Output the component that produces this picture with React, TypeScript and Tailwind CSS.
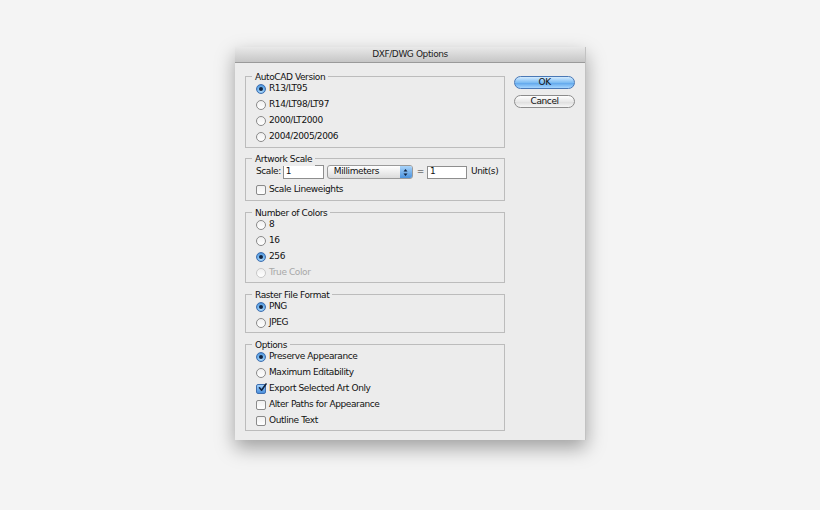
import React from "react";

const font = { fontFamily: '"DejaVu Sans", "Lucida Grande", sans-serif' };

function Radio({ on, disabled }: { on?: boolean; disabled?: boolean }) {
  if (on) {
    return (
      <span className="relative inline-flex h-[10px] w-[10px] shrink-0 items-center justify-center rounded-full border border-[#3f6fb0] bg-[radial-gradient(circle_at_50%_70%,#bfe3ff_0%,#6aaeea_55%,#3a7fd0_100%)]">
        <span className="h-[4px] w-[4px] rounded-full bg-[#10233f]" />
      </span>
    );
  }
  return (
    <span
      className={
        "inline-block h-[10px] w-[10px] shrink-0 rounded-full border bg-[linear-gradient(#f0f0f0,#ffffff)] " +
        (disabled ? "border-[#c8c8c8]" : "border-[#8a8a8a]")
      }
    />
  );
}

function Check({ on }: { on?: boolean }) {
  if (on) {
    return (
      <span className="relative inline-flex h-[10px] w-[10px] shrink-0 items-center justify-center rounded-[2px] border border-[#3f6fb0] bg-[linear-gradient(#9fd0fb,#4a8fdc)]">
        <svg width="9" height="9" viewBox="0 0 9 9" className="absolute -top-[2px] left-[1px]">
          <path d="M1.5 4.8 L3.6 7.2 L8 1" stroke="#10233f" strokeWidth="1.6" fill="none" strokeLinecap="round" strokeLinejoin="round" />
        </svg>
      </span>
    );
  }
  return <span className="inline-block h-[10px] w-[10px] shrink-0 rounded-[2px] border border-[#8a8a8a] bg-[linear-gradient(#f0f0f0,#ffffff)]" />;
}

function Row({ children, label, disabled }: { children: React.ReactNode; label: string; disabled?: boolean }) {
  return (
    <div className="flex h-[16px] items-center gap-[2px]">
      {children}
      <span className={"ml-[1px] " + (disabled ? "text-[#a8a8a8]" : "text-[#111]")}>{label}</span>
    </div>
  );
}

function Group({ title, className, children }: { title: string; className: string; children: React.ReactNode }) {
  return (
    <div className={"relative border border-[#bcbcbc] pl-[10px] " + className}>
      <span className="absolute -top-[7px] left-[6px] bg-[#ececec] px-[3px] leading-[14px] text-[#111]">{title}</span>
      {children}
    </div>
  );
}

export default function App() {
  return (
    <div className="h-[510px] w-[820px] bg-[#f4f4f4] pt-[47px]" style={font}>
      <div className="ml-[235px] flex h-[393px] w-[351px] flex-col border-r border-[#c2c2c2] bg-[#ececec] text-[9px] tracking-[-0.4px] shadow-[0_8px_18px_rgba(0,0,0,0.35)]">
        <div className="flex h-[16px] items-center justify-center border-b border-[#9a9a9a] bg-[linear-gradient(#e9e9e9,#c6c6c6)] text-[9px] text-[#222]">
          DXF/DWG Options
        </div>
        <div className="flex flex-1 px-[10px] pt-[13px]">
          <div className="flex w-[261px] flex-col">
            <Group title="AutoCAD Version" className="h-[72px] pt-[4px]">
              <Row label="R13/LT95"><Radio on /></Row>
              <Row label="R14/LT98/LT97"><Radio /></Row>
              <Row label="2000/LT2000"><Radio /></Row>
              <Row label="2004/2005/2006"><Radio /></Row>
            </Group>
            <Group title="Artwork Scale" className="mt-[10px] h-[43px] pt-[4px]">
              <div className="flex h-[18px] items-center">
                <span className="text-[#111]">Scale:</span>
                <span className="ml-[2px] flex h-[14px] w-[41px] items-center border border-[#8e8e8e] bg-white pl-[2px] text-[#111]">1</span>
                <span className="ml-[3px] flex h-[14px] w-[86px] items-center justify-between rounded-[3px] border border-[#9a9a9a] bg-[linear-gradient(#ffffff,#dcdcdc)] pl-[6px] text-[#111]">
                  Millimeters
                  <span className="flex h-[12px] w-[12px] flex-col items-center justify-center gap-[1px] rounded-r-[2px] bg-[linear-gradient(#a9d4fb,#4b92dd)]">
                    <svg width="5" height="9" viewBox="0 0 5 9">
                      <path d="M0.5 3.5 L2.5 1 L4.5 3.5 Z M0.5 5.5 L2.5 8 L4.5 5.5 Z" fill="#10233f" />
                    </svg>
                  </span>
                </span>
                <span className="ml-[4px] text-[#333]">=</span>
                <span className="ml-[3px] flex h-[13px] w-[40px] items-center border border-[#8e8e8e] bg-white pl-[2px] text-[#111]">1</span>
                <span className="ml-[4px] text-[#111]">Unit(s)</span>
              </div>
              <div className="mt-[1px]">
                <Row label="Scale Lineweights"><Check /></Row>
              </div>
            </Group>
            <Group title="Number of Colors" className="mt-[11px] h-[71px] pt-[4px]">
              <Row label="8"><Radio /></Row>
              <Row label="16"><Radio /></Row>
              <Row label="256"><Radio on /></Row>
              <Row label="True Color" disabled><Radio disabled /></Row>
            </Group>
            <Group title="Raster File Format" className="mt-[11px] h-[39px] pt-[4px]">
              <Row label="PNG"><Radio on /></Row>
              <Row label="JPEG"><Radio /></Row>
            </Group>
            <Group title="Options" className="mt-[11px] h-[87px] pt-[4px]">
              <Row label="Preserve Appearance"><Radio on /></Row>
              <Row label="Maximum Editability"><Radio /></Row>
              <Row label="Export Selected Art Only"><Check on /></Row>
              <Row label="Alter Paths for Appearance"><Check /></Row>
              <Row label="Outline Text"><Check /></Row>
            </Group>
          </div>
          <div className="ml-[9px] flex w-[61px] flex-col">
            <button className="flex h-[13px] items-center justify-center rounded-full border border-[#4a78b5] bg-[linear-gradient(#d3ebff,#7fbdf3_50%,#5aa3ea_51%,#a6d6ff)] text-[9px] text-[#111]">
              OK
            </button>
            <button className="mt-[6px] flex h-[13px] items-center justify-center rounded-full border border-[#8c8c8c] bg-[linear-gradient(#ffffff,#e8e8e8_50%,#dcdcdc_51%,#f6f6f6)] text-[9px] text-[#111]">
              Cancel
            </button>
          </div>
        </div>
      </div>
    </div>
  );
}
